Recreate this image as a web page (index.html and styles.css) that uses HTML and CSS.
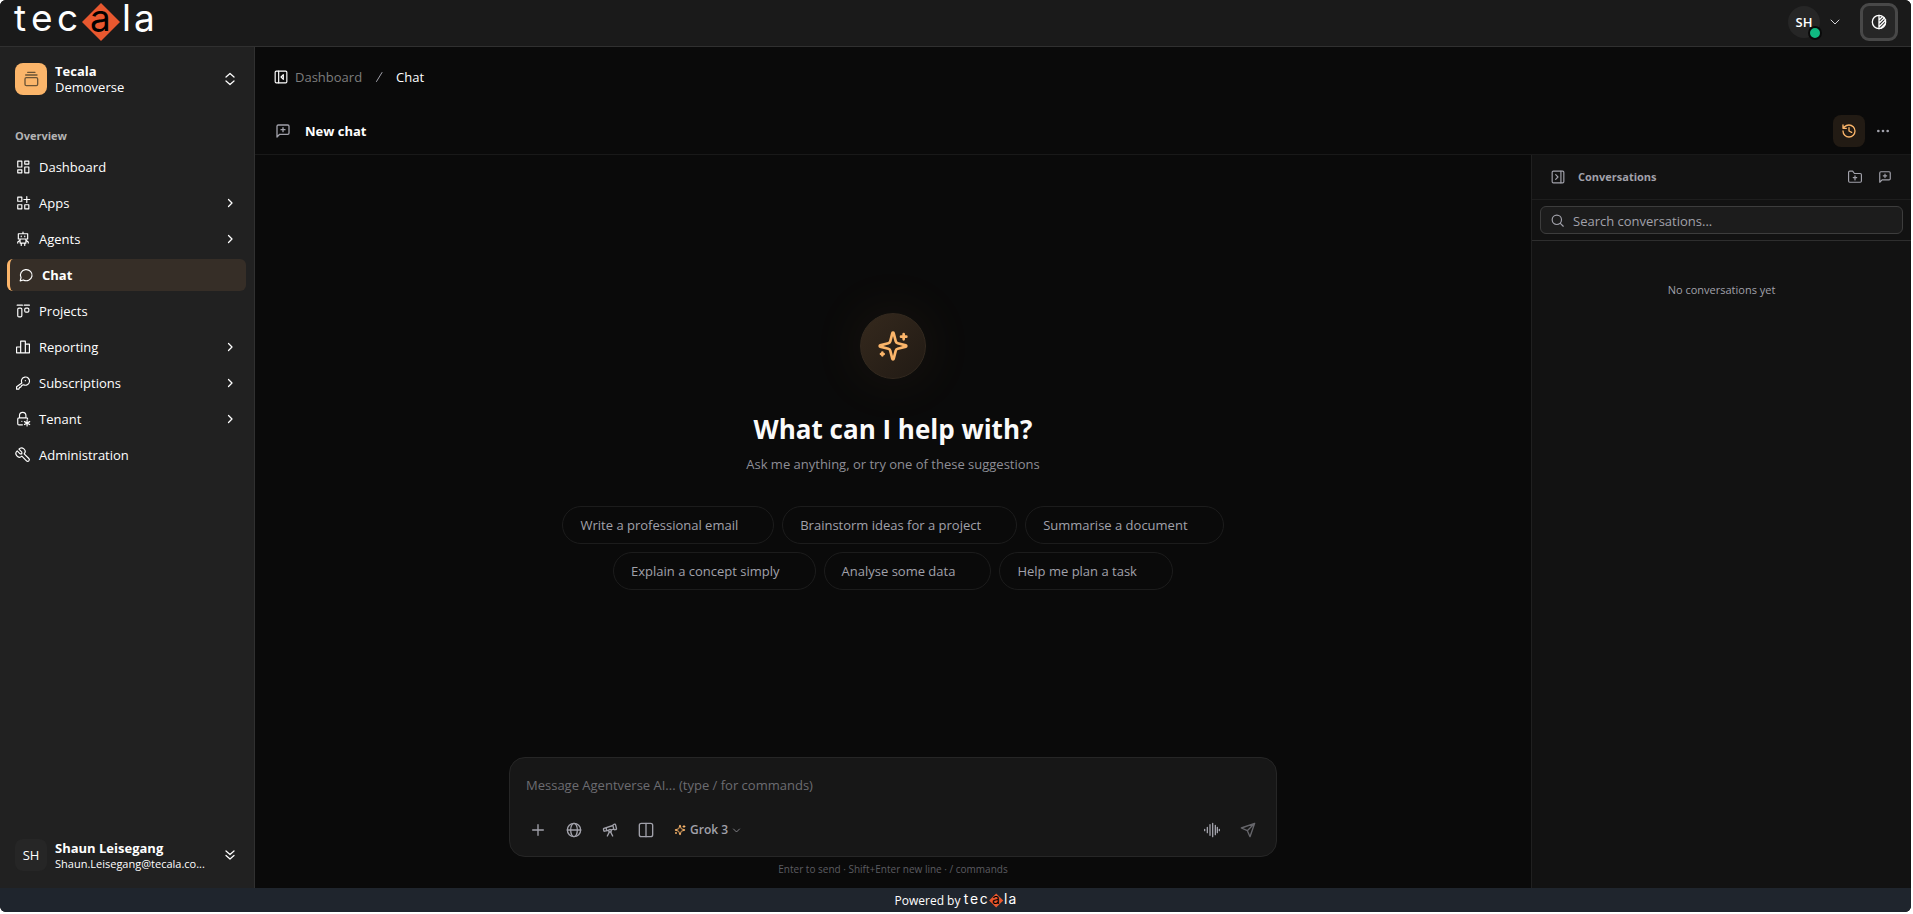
FILE: index.html
```html
<!DOCTYPE html>
<html lang="en">
<head>
  <meta charset="UTF-8">
  <meta name="viewport" content="width=device-width, initial-scale=1.0">
  <title>Chat</title>
  <link rel="stylesheet" href="styles.css">
</head>
<body>

<!-- shared icons -->
<svg class="sprite" aria-hidden="true">
  <symbol id="logo" viewBox="0 0 139 40" overflow="visible">
    <path d="M86 1l19 19l-19 19l-19 -19z" fill="#e8582f"/>
    <text class="logo-text" y="29" x="-1 16 42 75 107 119">tec<tspan class="logo-a">a</tspan>la</text>
  </symbol>
  <symbol id="chevron-right" viewBox="0 0 24 24"><path d="M9 5l7 7l-7 7"/></symbol>
  <symbol id="chevron-down" viewBox="0 0 24 24"><path d="M4 8l8 8l8 -8"/></symbol>
  <symbol id="message-plus" viewBox="0 0 24 24"><path d="M21 15a2 2 0 0 1 -2 2H7l-4 4V5a2 2 0 0 1 2 -2h14a2 2 0 0 1 2 2zM12 7v6M9 10h6"/></symbol>
  <symbol id="sparkles" viewBox="0 0 24 24"><path d="M9.937 15.5A2 2 0 0 0 8.5 14.063l-6.135-1.582a.5.5 0 0 1 0-.962L8.5 9.936A2 2 0 0 0 9.937 8.5l1.582-6.135a.5.5 0 0 1 .963 0L14.063 8.5A2 2 0 0 0 15.5 9.937l6.135 1.581a.5.5 0 0 1 0 .964L15.5 14.063a2 2 0 0 0-1.437 1.437l-1.582 6.135a.5.5 0 0 1-.963 0zM20 3v4M22 5h-4M4 17v2M5 18H3"/></symbol>
</svg>

<div class="app">
  <header class="topbar">
    <a href="#" aria-label="tecala home"><svg class="logo"><use href="#logo"/></svg></a>
    <div class="topbar-right">
      <button type="button" class="account" aria-label="Account menu">
        <span class="account-avatar">SH<i class="status"></i></span>
        <svg class="icon icon-sm"><use href="#chevron-down"/></svg>
      </button>
      <button type="button" class="theme-btn" aria-label="Theme">
        <svg class="icon icon-md" viewBox="0 0 24 24"><circle cx="12" cy="12" r="10"/><path d="M12 2v20M12 9l5 -5M12 14l8 -8M12 19l10 -10M15 21l6 -6"/></svg>
      </button>
    </div>
  </header>

  <div class="body">
    <aside class="sidebar">
      <button type="button" class="profile">
        <span class="badge">
          <svg class="icon icon-md" viewBox="0 0 24 24"><rect x="3" y="10" width="19" height="12" rx="2"/><path d="M4 6h17M7 2h11"/></svg>
        </span>
        <span class="profile-text"><b>Tecala</b><span>Demoverse</span></span>
        <svg class="icon icon-sm" viewBox="0 0 24 24"><path d="M4 8l8 -7l8 7M4 16l8 7l8 -7"/></svg>
      </button>

      <nav class="nav">
        <p class="nav-title">Overview</p>
        <a href="#" class="nav-item">
          <svg class="icon icon-nav" viewBox="0 0 24 24"><path d="M3 2h7v10h-7zM15 2h7v5h-7zM3 17h7v5h-7zM15 12h7v10h-7z"/></svg>
          <span>Dashboard</span>
        </a>
        <a href="#" class="nav-item">
          <svg class="icon icon-nav" viewBox="0 0 24 24"><path d="M3 2h7v7h-7zM3 15h7v7h-7zM15 15h7v7h-7zM18.500 1v10M13.500 6h10"/></svg>
          <span>Apps</span>
          <svg class="icon icon-sm"><use href="#chevron-right"/></svg>
        </a>
        <a href="#" class="nav-item">
          <svg class="icon icon-nav icon-robot" viewBox="0 0 24 24"><path d="M12 0v3M4 3h16v9h-16zM9 7v1M15 7v1M7 12v7h10v-7M7 14l-4 3v2M17 14l4 3v2M9 19v4M15 19v4"/></svg>
          <span>Agents</span>
          <svg class="icon icon-sm"><use href="#chevron-right"/></svg>
        </a>
        <a href="#" class="nav-item active">
          <svg class="icon icon-nav" viewBox="0 0 24 24"><path d="M2 22l1.500 -5.500a10 9.500 0 1 1 4 4z"/></svg>
          <span>Chat</span>
        </a>
        <a href="#" class="nav-item">
          <svg class="icon icon-nav" viewBox="0 0 24 24"><path d="M2 2h9M14 2h9"/><rect x="3" y="7" width="7" height="15" rx="2"/><rect x="15" y="7" width="7" height="7" rx="2"/></svg>
          <span>Projects</span>
        </a>
        <a href="#" class="nav-item">
          <svg class="icon icon-nav" viewBox="0 0 24 24"><path d="M1 12h7v10h-7zM8 2h8v20h-8zM16 7h7v15h-7z"/></svg>
          <span>Reporting</span>
          <svg class="icon icon-sm"><use href="#chevron-right"/></svg>
        </a>
        <a href="#" class="nav-item">
          <svg class="icon icon-nav" viewBox="0 0 24 24"><path d="M10 12a7 7 0 1 1 3 3l-3 1l-2 3l-2 .500l-1 3h-4v-4z"/><path d="M16 8h.1"/></svg>
          <span>Subscriptions</span>
          <svg class="icon icon-sm"><use href="#chevron-right"/></svg>
        </a>
        <a href="#" class="nav-item">
          <svg class="icon icon-nav" viewBox="0 0 24 24"><path d="M11 22h-6a2 2 0 0 1 -2 -2v-8a2 2 0 0 1 2 -2h13a2 2 0 0 1 2 2M6 10v-4a5.500 5.500 0 0 1 11 0v4M10 16h.1M19 14v10M14.500 16.500l9 5M14.500 21.500l9 -5"/></svg>
          <span>Tenant</span>
          <svg class="icon icon-sm"><use href="#chevron-right"/></svg>
        </a>
        <a href="#" class="nav-item">
          <svg class="icon icon-nav" viewBox="0 0 24 24"><path d="M7 10h3v-3l-5 -5a6 6 0 0 1 9 8l8 8a2.800 2.800 0 0 1 -4 4l-8 -8a6 6 0 0 1 -8 -9l5 5"/></svg>
          <span>Administration</span>
        </a>
      </nav>

      <button type="button" class="profile profile-user">
        <span class="badge badge-user">SH</span>
        <span class="profile-text"><b>Shaun Leisegang</b><small>Shaun.Leisegang@tecala.co...</small></span>
        <svg class="icon icon-sm" viewBox="0 0 24 24"><path d="M4 4l8 7l8 -7M4 13l8 7l8 -7"/></svg>
      </button>
    </aside>

    <main class="main">
      <div class="crumbs">
        <svg class="icon icon-nav" viewBox="0 0 24 24"><rect x="2" y="2" width="20" height="20" rx="2"/><path d="M8 2v20M16 8l-4 4l4 4z"/></svg>
        <a href="#">Dashboard</a>
        <svg class="icon icon-sm icon-slash" viewBox="0 0 24 24"><path d="M7 21l11 -18"/></svg>
        <span>Chat</span>
      </div>

      <div class="chat-head">
        <svg class="icon icon-md muted"><use href="#message-plus"/></svg>
        <h1>New chat</h1>
        <button type="button" class="icon-btn history" aria-label="History">
          <svg class="icon icon-md" viewBox="0 0 24 24"><path d="M3 12a9 9 0 1 0 9 -9a9.750 9.750 0 0 0 -6.740 2.740L3 8M3 3v5h5M12 7v5l4 2"/></svg>
        </button>
        <button type="button" class="icon-btn more" aria-label="More">
          <svg class="icon icon-md dots" viewBox="0 0 24 24"><circle cx="5" cy="12" r="2"/><circle cx="12" cy="12" r="2"/><circle cx="19" cy="12" r="2"/></svg>
        </button>
      </div>

      <div class="workspace">
        <section class="chat">
          <div class="hero">
            <div class="hero-icon"><svg class="icon"><use href="#sparkles"/></svg></div>
            <h2>What can I help with?</h2>
            <p>Ask me anything, or try one of these suggestions</p>
            <div class="chips">
              <button type="button" class="chip">Write a professional email</button>
              <button type="button" class="chip">Brainstorm ideas for a project</button>
              <button type="button" class="chip">Summarise a document</button>
              <button type="button" class="chip">Explain a concept simply</button>
              <button type="button" class="chip">Analyse some data</button>
              <button type="button" class="chip">Help me plan a task</button>
            </div>
          </div>

          <form class="composer">
            <textarea rows="1" aria-label="Message" placeholder="Message Agentverse AI... (type / for commands)"></textarea>
            <div class="tools">
              <button type="button" class="icon-btn" aria-label="Add"><svg class="icon icon-md" viewBox="0 0 24 24"><path d="M12 4v16M4 12h16"/></svg></button>
              <button type="button" class="icon-btn" aria-label="Web search"><svg class="icon icon-md" viewBox="0 0 24 24"><circle cx="12" cy="12" r="10"/><ellipse cx="12" cy="12" rx="5" ry="10"/><path d="M2 12h20"/></svg></button>
              <button type="button" class="icon-btn" aria-label="Research"><svg class="icon icon-md" viewBox="0 0 24 24"><path d="m10.065 12.493-6.180 1.318a.934.934 0 0 1-1.108-.702l-.537-2.150a1.070 1.070 0 0 1 .691-1.265l13.504-4.440M13.560 11.747l4.332-.924M16 21l-3.105-6.210M16.485 5.940a2 2 0 0 1 1.455-2.425l1.090-.272a1 1 0 0 1 1.212.727l1.515 6.060a1 1 0 0 1-.727 1.213l-1.090.272a2 2 0 0 1-2.425-1.455zM6.158 8.633l1.114 4.456M8 21l3.105-6.210"/><circle cx="12" cy="13" r="2"/></svg></button>
              <button type="button" class="icon-btn" aria-label="Compare"><svg class="icon icon-md" viewBox="0 0 24 24"><rect x="2" y="2" width="20" height="20" rx="3"/><path d="M12 2v20"/></svg></button>
              <button type="button" class="model">
                <svg class="icon icon-sm accent"><use href="#sparkles"/></svg>
                Grok 3
                <svg class="icon icon-xs"><use href="#chevron-down"/></svg>
              </button>
              <button type="button" class="icon-btn voice" aria-label="Voice"><svg class="icon icon-md" viewBox="0 0 24 24"><path d="M1 11v2M5 8v8M9 4v16M13 2v20M17 5v14M20 8v8M23 11v2"/></svg></button>
              <button type="submit" class="icon-btn send" aria-label="Send"><svg class="icon icon-md" viewBox="0 0 24 24"><path d="M22 2l-7 20l-4 -9l-9 -4zM22 2l-11 11"/></svg></button>
            </div>
          </form>
          <p class="hint">Enter to send · Shift+Enter new line · / commands</p>
        </section>

        <aside class="history-panel">
          <div class="panel-head">
            <svg class="icon icon-nav" viewBox="0 0 24 24"><rect x="2" y="2" width="20" height="20" rx="2"/><path d="M17 2v20M8 8l4 4l-4 4"/></svg>
            <h3>Conversations</h3>
            <button type="button" class="panel-btn" aria-label="New folder"><svg class="icon icon-nav" viewBox="0 0 24 24"><path d="M1 4a2 2 0 0 1 2 -2h5l3 4h10a2 2 0 0 1 2 2v11a2 2 0 0 1 -2 2h-18a2 2 0 0 1 -2 -2zM12 10v7M9 13h6"/></svg></button>
            <button type="button" class="panel-btn" aria-label="New chat"><svg class="icon icon-nav"><use href="#message-plus"/></svg></button>
          </div>
          <div class="search-wrap">
            <label class="search">
              <svg class="icon icon-nav" viewBox="0 0 24 24"><circle cx="10" cy="10" r="8"/><path d="M16 16l5 5"/></svg>
              <input type="search" aria-label="Search conversations" placeholder="Search conversations...">
            </label>
          </div>
          <p class="empty">No conversations yet</p>
        </aside>
      </div>
    </main>
  </div>

  <footer class="footer">
    <span>Powered by</span>
    <svg class="logo logo-small"><use href="#logo"/></svg>
  </footer>
</div>

</body>
</html>
```

FILE: styles.css
```css
* {
  box-sizing: border-box;
}

body {
  margin: 0;
  background: #fff;
  color: #fff;
  font-family: "Segoe UI", "Open Sans", sans-serif;
  font-size: 13px;
  line-height: 16px;
}

h1, h2, h3, p {
  margin: 0;
}

a {
  color: inherit;
  text-decoration: none;
}

button, input, textarea {
  font: inherit;
  color: inherit;
  background: none;
  border: 0;
  padding: 0;
}

.sprite {
  position: absolute;
  width: 0;
  height: 0;
}

.app {
  display: flex;
  flex-direction: column;
  height: calc(100vh - 2px);
  margin-right: 2px;
  border-radius: 6px;
  overflow: hidden;
  background: #0a0a0a;
}

/* icons */
.icon {
  flex: none;
  width: 32px;
  height: 32px;
  fill: none;
  stroke: currentColor;
  stroke-width: 2;
  stroke-linecap: round;
  stroke-linejoin: round;
  overflow: visible;
}

.icon-md {
  width: 16px;
  height: 16px;
}

.icon-nav {
  width: 14px;
  height: 14px;
}

.icon-sm {
  width: 12px;
  height: 12px;
}

.icon-xs {
  width: 9px;
  height: 9px;
}

.dots {
  fill: currentColor;
  stroke: none;
}

.accent {
  color: #fbb56a;
}

.muted {
  color: #a1a1aa;
}

.icon-btn {
  display: flex;
  align-items: center;
  justify-content: center;
  width: 32px;
  height: 32px;
  border-radius: 8px;
  color: #a1a1aa;
}

/* logo */
.logo {
  display: block;
  width: 139px;
  height: 40px;
  overflow: visible;
}

.logo-small {
  width: 52px;
  height: 15px;
}

.logo-text {
  font-family: Inter, sans-serif;
  font-size: 37px;
  font-weight: 400;
  fill: #fff;
}

.logo-a {
  fill: #000;
}

/* top bar */
.topbar {
  display: flex;
  align-items: center;
  justify-content: space-between;
  height: 47px;
  padding: 0 13px 2px 15px;
  background: #1a1a1a;
  border-bottom: 1px solid #303030;
}

.topbar-right,
.account {
  display: flex;
  align-items: center;
}

.topbar-right {
  gap: 19px;
}

.account {
  gap: 9px;
  color: #d4d4d8;
}

.account-avatar {
  position: relative;
  width: 32px;
  border-radius: 50%;
  background: #262626;
  color: #fff;
  font-weight: 600;
  line-height: 32px;
  text-align: center;
}

.status {
  position: absolute;
  right: -2px;
  bottom: -2px;
  width: 14px;
  height: 14px;
  border: 2px solid #0a0a0a;
  border-radius: 50%;
  background: #10b981;
}

.theme-btn {
  display: flex;
  align-items: center;
  justify-content: center;
  width: 38px;
  height: 38px;
  border: 3px solid #484848;
  border-radius: 9px;
  background: #262626;
}

.body {
  display: flex;
  flex: 1;
  min-height: 0;
}

/* sidebar */
.sidebar {
  display: flex;
  flex-direction: column;
  flex: none;
  width: 255px;
  background: #212121;
  border-right: 1px solid #303030;
}

.sidebar .icon-sm {
  stroke-width: 2.5;
}

.profile {
  display: flex;
  align-items: center;
  gap: 8px;
  padding: 16px 18px 16px 15px;
  text-align: left;
}

.profile-text {
  display: flex;
  flex-direction: column;
  flex: 1;
  min-width: 0;
  white-space: nowrap;
}

.profile-user .profile-text {
  padding-top: 2px;
}

.profile small {
  font-size: 11px;
}

.badge {
  display: flex;
  align-items: center;
  justify-content: center;
  width: 32px;
  height: 32px;
  border-radius: 8px;
  background: #fbb56a;
  color: #6b5436;
}

.badge-user {
  background: #262626;
  color: #fff;
}

.nav {
  display: flex;
  flex-direction: column;
  flex: 1;
  gap: 4px;
  padding: 17px 8px 0 7px;
}

.nav-title {
  padding-left: 8px;
  margin-bottom: 3px;
  color: #b4b4b4;
  font-size: 11px;
  font-weight: 700;
}

.nav-item {
  display: flex;
  align-items: center;
  gap: 9px;
  height: 32px;
  padding: 0 10px 0 9px;
  border-radius: 6px;
}

.nav-item span {
  flex: 1;
}

.nav-item.active {
  background: #362e27;
  border-left: 3px solid #fbb56a;
  font-weight: 700;
}

/* main column */
.main {
  display: flex;
  flex-direction: column;
  flex: 1;
  min-width: 0;
}

.crumbs {
  display: flex;
  align-items: center;
  height: 60px;
  padding-left: 19px;
}

.crumbs a {
  margin: 0 11px 0 7px;
  color: #7d7d7d;
}

.crumbs span {
  margin-left: 11px;
}

.icon-slash {
  color: #a1a1aa;
}

.chat-head {
  display: flex;
  align-items: center;
  height: 48px;
  padding: 0 12px 0 20px;
  border-bottom: 1px solid #191919;
}

.chat-head h1 {
  flex: 1;
  margin-left: 14px;
  font-size: 13px;
  font-weight: 700;
}

.history {
  background: #221b14;
  color: #fbb56a;
  margin-right: 2px;
}

.workspace {
  display: flex;
  flex: 1;
  min-height: 0;
}

.chat {
  display: flex;
  flex-direction: column;
  align-items: center;
  flex: 1;
  min-width: 0;
}

.hero {
  display: flex;
  flex-direction: column;
  align-items: center;
  justify-content: center;
  flex: 1;
  padding-bottom: 1px;
}

.hero-icon {
  display: flex;
  align-items: center;
  justify-content: center;
  width: 66px;
  height: 66px;
  margin-bottom: 31px;
  border: 1px solid #33291f;
  border-radius: 50%;
  background: linear-gradient(135deg, #35291d, #211a14);
  box-shadow: 0 0 60px rgba(251, 181, 106, 0.08);
  color: #fbb56a;
}

.hero h2 {
  font-size: 26px;
  font-weight: 700;
  line-height: 38px;
  color: #fafafa;
}

.hero p {
  margin: 7px 0 33px;
  line-height: 18px;
  color: #8e8e96;
}

.chips {
  display: flex;
  flex-wrap: wrap;
  justify-content: center;
  gap: 8px;
  max-width: 672px;
}

.chip {
  height: 38px;
  padding: 0 35px 0 17px;
  border: 1px solid #1c1c1c;
  border-radius: 19px;
  color: #a1a1aa;
}

.composer {
  width: calc(100% - 32px);
  max-width: 768px;
  margin-top: 8px;
  padding: 16px 12px 10px;
  border: 1px solid #262626;
  border-radius: 16px;
  background: #171717;
}

.composer textarea {
  display: block;
  width: 100%;
  height: 40px;
  padding: 3px 4px;
  outline: 0;
  resize: none;
}

.composer textarea::placeholder {
  color: #6c6c71;
}

.tools {
  display: flex;
  align-items: center;
  gap: 4px;
}

.model {
  display: flex;
  align-items: center;
  gap: 4px;
  padding: 0 8px;
  color: #a1a1aa;
  font-size: 12px;
  font-weight: 600;
}

.voice {
  margin-left: auto;
}

.send {
  color: #66666b;
}

.hint {
  padding: 5px 0 12px;
  color: #5c5c61;
  font-size: 10px;
  line-height: 14px;
}

/* conversations */
.history-panel {
  flex: none;
  width: 380px;
  background: #121212;
  border-left: 1px solid #202020;
}

.panel-head {
  display: flex;
  align-items: center;
  height: 45px;
  padding: 0 11px 0 19px;
  border-bottom: 1px solid #1e1e1e;
  color: #a1a1aa;
}

.panel-head h3 {
  flex: 1;
  margin-left: 13px;
  font-size: 11px;
  font-weight: 700;
}

.panel-btn {
  display: flex;
  padding: 8px;
}

.search-wrap {
  padding: 6px 8px;
  border-bottom: 1px solid #2e2e2e;
}

.search {
  display: flex;
  align-items: center;
  gap: 8px;
  height: 28px;
  padding: 1px 10px 0;
  border: 1px solid #3d3d3d;
  border-radius: 6px;
  background: #1c1c1c;
  color: #a1a1aa;
}

.search input {
  flex: 1;
  min-width: 0;
  outline: 0;
}

.search input::placeholder {
  color: #a1a1aa;
}

.empty {
  padding: 40px 0;
  color: #a1a1aa;
  font-size: 11px;
  line-height: 18px;
  text-align: center;
}

/* footer */
.footer {
  display: flex;
  align-items: center;
  justify-content: center;
  gap: 4px;
  height: 24px;
  padding-top: 1px;
  background: #1f252d;
  font-size: 12px;
}
```
